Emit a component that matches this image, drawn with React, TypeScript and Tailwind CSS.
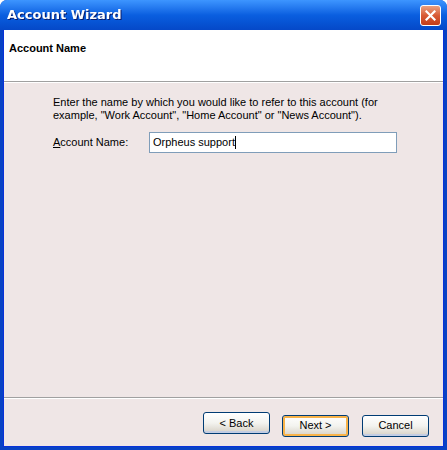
const WizardButton = ({ label, focused }: { label: string; focused?: boolean }) => {
  return (
    <button
      className={
        "w-[67px] h-[22px] rounded-[3px] border border-[#003c74] text-[11px] leading-[13px] text-black bg-gradient-to-b from-[#ffffff] via-[#f3f3ef] to-[#d6d0c5] " +
        (focused ? "shadow-[inset_0_0_0_2px_#f8b34a]" : "shadow-[inset_0_-2px_0_#c3cde3,inset_0_1px_0_#fff]")
      }
    >
      {label}
    </button>
  );
};

const App = () => {
  return (
    <div
      className="w-[447px] h-[450px] flex flex-col bg-[#0842c4] rounded-t-[7px] overflow-hidden"
      style={{ fontFamily: "Tahoma, 'Liberation Sans', sans-serif" }}
    >
      {/* title bar */}
      <div className="h-[30px] shrink-0 flex items-center justify-between pl-[7px] pr-[6px] bg-gradient-to-b from-[#3d95ff] via-[#0a5fe0] to-[#0548c8]">
        <span
          className="text-white text-[13px] font-bold drop-shadow-[1px_1px_0_#0a1e6e]"
          style={{ fontFamily: "'Trebuchet MS', 'DejaVu Sans', sans-serif" }}
        >
          Account Wizard
        </span>
        <div className="w-[21px] h-[21px] rounded-[3px] border border-white bg-gradient-to-b from-[#e8a080] via-[#d85a34] to-[#c43c18] flex items-center justify-center">
          <svg width="11" height="11" viewBox="0 0 11 11">
            <path d="M1.5 1.5 L9.5 9.5 M9.5 1.5 L1.5 9.5" stroke="white" strokeWidth="2.2" strokeLinecap="square" />
          </svg>
        </div>
      </div>

      {/* client area inside frame */}
      <div className="flex-1 flex flex-col mx-[3px] mb-[3px] border-x border-b border-[#0831d9] bg-[#efe6e6]">
        <div className="h-[52px] shrink-0 bg-white px-[5px] pt-[5px] border-b border-[#a0a0a0]">
          <span className="text-[11px] leading-[13px] font-bold text-black">Account Name</span>
        </div>
        <div className="h-px bg-white" />

        <div className="flex-1 flex flex-col pl-[49px] pr-[40px] pt-[13px] text-[11px] text-black leading-[13px]">
          <p>
            Enter the name by which you would like to refer to this account (for example, "Work Account", "Home Account" or "News Account").
          </p>
          <div className="flex items-center mt-[10px]">
            <label className="w-[96px]">
              <span className="underline">A</span>ccount Name:
            </label>
            <div className="w-[248px] h-[21px] bg-white border border-[#7f9db9] flex items-center px-[3px]">
              <span>Orpheus support</span>
              <span className="w-px h-[13px] bg-black" />
            </div>
          </div>
        </div>

        <div className="h-px bg-[#a0a0a0]" />
        <div className="h-px bg-white" />
        <div className="h-[47px] shrink-0 flex items-start justify-end pt-[13px] pr-[14px]">
          <WizardButton label="< Back" />
          <div className="ml-[12px]">
            <WizardButton label="Next >" focused />
          </div>
          <div className="ml-[13px]">
            <WizardButton label="Cancel" />
          </div>
        </div>
      </div>
    </div>
  );
};

export default App;
